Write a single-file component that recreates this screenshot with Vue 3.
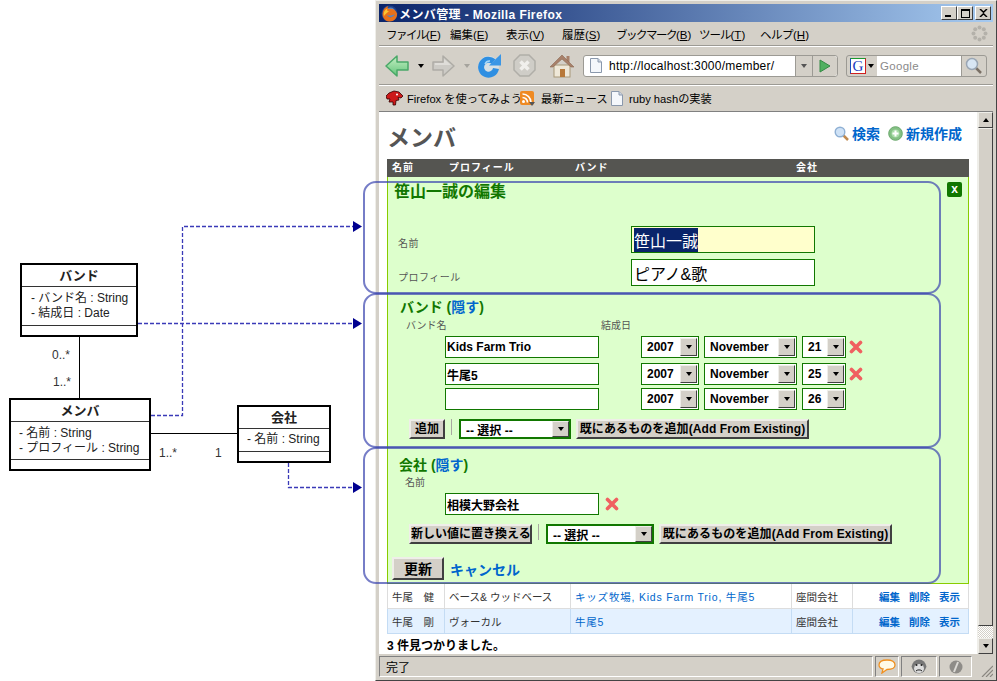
<template>
  <div class="page">
    <!-- uml diagram on the left -->
    <div class="diagram">
      <div v-for="box in umlBoxes" :key="box.name" class="uml" :class="box.cls">
        <div class="uml-name">{{ box.name }}</div>
        <div class="uml-attrs">
          <div v-for="a in box.attrs" :key="a">{{ a }}</div>
        </div>
        <div class="uml-ops"></div>
      </div>
      <span class="mult m1">0..*</span>
      <span class="mult m2">1..*</span>
      <span class="mult m3">1..*</span>
      <span class="mult m4">1</span>
    </div>

    <!-- browser window -->
    <div class="window">
      <div class="titlebar">
        <svg class="ff-icon" width="17" height="17" viewBox="0 0 17 17">
          <circle cx="8.500" cy="8.500" r="8" fill="#1f3f88" />
          <circle cx="9.500" cy="7.500" r="5" fill="#4f86cc" />
          <path d="M2 12C.5 7 3 2 7.500 1 6 2.500 6.500 4 8 4 11 3 15 4.500 16 8.500 16.500 13 13 16.500 8.500 16.500 5.500 16.500 3.500 15 2 12ZM6 10C7.500 13 12 13 14 9 12 10.500 8.500 11 6 10Z" fill="#e8701a" />
          <path d="M3 11C2 7.500 4 4.500 6.500 3.500 5.500 5.500 6.500 6.500 8.500 6 6.500 7.500 4.500 8.500 3 11Z" fill="#fbc431" />
        </svg>
        <span class="title-text">メンバ管理 - Mozilla Firefox</span>
        <div class="win-btns">
          <button class="win-btn"><i class="w-min"></i></button>
          <button class="win-btn"><i class="w-max"></i></button>
          <button class="win-btn close-btn">
            <svg width="9" height="8" viewBox="0 0 9 8"><path d="M1 0 4.500 3.200 8 0M1 8 4.500 4.800 8 8" stroke="#000" stroke-width="1.500" fill="none" /></svg>
          </button>
        </div>
      </div>

      <div class="menubar">
        <span v-for="m in menus" :key="m.label" class="menu-item" :style="{ width: m.w + 'px' }"><span :style="{ letterSpacing: m.ls + 'px' }">{{ m.label }}</span>(<u>{{ m.key }}</u>)</span>
        <svg class="throbber" width="17" height="17" viewBox="0 0 17 17">
          <g fill="#b4b1aa">
            <circle cx="8.500" cy="2.500" r="2" /><circle cx="12.800" cy="4.200" r="2" /><circle cx="14.500" cy="8.500" r="2" /><circle cx="12.800" cy="12.800" r="2" />
            <circle cx="8.500" cy="14.500" r="2" /><circle cx="4.200" cy="12.800" r="2" /><circle cx="2.500" cy="8.500" r="2" /><circle cx="4.200" cy="4.200" r="2" />
          </g>
        </svg>
      </div>

      <div class="toolbar">
        <svg width="24" height="22" viewBox="0 0 24 22" class="tb-back">
          <defs>
            <linearGradient id="backFill" x1="0" y1="0" x2="0" y2="1">
              <stop offset="0" stop-color="#c6f0c4" />
              <stop offset="1" stop-color="#62c47a" />
            </linearGradient>
          </defs>
          <path d="M1 11 12 1V7H23V15H12V21Z" fill="url(#backFill)" stroke="#4aa868" stroke-width="1.500" stroke-linejoin="round" />
        </svg>
        <i class="drop tb-d1"></i>
        <svg width="23" height="22" viewBox="0 0 23 22" class="tb-fwd">
          <path d="M22 11 11 1V7H1V15H11V21Z" fill="#cdcbc6" stroke="#aeaca6" stroke-width="1.500" stroke-linejoin="round" />
          <path d="M12 4V8H3V10H19Z" fill="#dfddd9" />
        </svg>
        <i class="drop off tb-d2"></i>
        <svg width="24" height="24" viewBox="0 0 24 24" class="tb-reload">
          <circle cx="11.500" cy="12.500" r="10.500" fill="#d8ebf8" opacity=".6" />
          <path d="M16.500 7.500A7.500 7.500 0 1 0 19 14.500" fill="none" stroke="#2f8fe2" stroke-width="6" />
          <path d="M12 11.500H24V0Z" fill="#3a96e6" />
          <path d="M8 10A5 5 0 0 1 13 7" fill="none" stroke="#a8d8f8" stroke-width="1.500" />
        </svg>
        <svg width="23" height="23" viewBox="0 0 23 23" class="tb-stop">
          <path d="M7 1H16L22 7V16L16 22H7L1 16V7Z" fill="#cfcdc7" stroke="#b0aea8" stroke-width="1.500" />
          <path d="M7.500 7.500 15.500 15.500M15.500 7.500 7.500 15.500" stroke="#f0efec" stroke-width="3.500" />
        </svg>
        <svg width="24" height="24" viewBox="0 0 24 24" class="tb-home">
          <rect x="4" y="11" width="16" height="12" fill="#efe8d8" stroke="#a89878" />
          <rect x="16.500" y="2" width="3" height="6" fill="#a8806a" />
          <path d="M0 13 12 1 24 13 21 13 12 5 3 13Z" fill="#a8806a" stroke="#8c6850" stroke-width=".6" />
          <rect x="10" y="15" width="5" height="8" fill="#b87838" />
        </svg>
        <div class="urlbar">
          <svg width="12" height="15" viewBox="0 0 12 15" class="page-ico">
            <path d="M.5.500H8L11.500 4V14.500H.5Z" fill="#f4f7fb" stroke="#8a98ac" />
            <path d="M8 .5V4H11.500" fill="#cdd6e2" stroke="#8a98ac" />
          </svg>
          <span class="url-text">http://localhost:3000/member/</span>
          <span class="url-drop"><i class="drop gray"></i></span>
          <span class="url-go">
            <svg width="12" height="14" viewBox="0 0 12 14"><path d="M1 1 11 7 1 13Z" fill="#50b060" stroke="#358a45" /></svg>
          </span>
        </div>
        <div class="searchbar">
          <span class="engine">
            <span class="g-box">G</span>
            <i class="drop"></i>
          </span>
          <span class="search-text">Google</span>
          <span class="search-go">
            <svg width="18" height="18" viewBox="0 0 18 18">
              <path d="M10.500 10.500 16 16" stroke="#7a7066" stroke-width="2.500" />
              <circle cx="7" cy="7" r="5.500" fill="#d8e6f4" stroke="#9aa6b4" stroke-width="1.500" />
            </svg>
          </span>
        </div>
      </div>

      <div class="bookmarks">
        <svg class="bm-dino" width="17" height="16" viewBox="0 0 17 16">
          <path d="M0 6 3 3 8 1 13 2 17 6 15 8 12 7.500 13 10 10 10.500 9.500 15 7 15 7 12 3 12 4 9 1 9Z" fill="#cc1a1a" stroke="#300" stroke-width=".8" />
          <circle cx="11" cy="4.500" r="1" fill="#fff" />
        </svg>
        <span class="bm-t1">Firefox を使ってみよう</span>
        <svg class="bm-rss" width="15" height="15" viewBox="0 0 15 15">
          <rect width="14" height="14" rx="2" fill="#ef8a22" />
          <circle cx="3.500" cy="10.500" r="1.500" fill="#fff" />
          <path d="M2.500 6.500A5 5 0 0 1 7.500 11.500M2.500 3A8.500 8.500 0 0 1 11 11.500" stroke="#fff" stroke-width="1.700" fill="none" />
          <path d="M9 11H15L12 15Z" fill="#555" />
        </svg>
        <span class="bm-t2">最新ニュース</span>
        <svg class="bm-page" width="12" height="15" viewBox="0 0 12 15">
          <path d="M.5.500H8L11.500 4V14.500H.5Z" fill="#f4f7fb" stroke="#8a98ac" />
          <path d="M8 .5V4H11.500" fill="#cdd6e2" stroke="#8a98ac" />
        </svg>
        <span class="bm-t3">ruby hashの実装</span>
      </div>

      <div class="viewport">
        <main class="content">
          <div class="head">
            <h1>メンバ</h1>
            <div class="head-links">
              <svg width="15" height="15" viewBox="0 0 15 15">
                <path d="M9 9 14 14" stroke="#c08a50" stroke-width="2.500" />
                <circle cx="6" cy="6" r="4.800" fill="#cfe2f6" stroke="#8fb0d4" stroke-width="1.400" />
              </svg>
              <a class="l-search">検索</a>
              <svg width="15" height="15" viewBox="0 0 15 15">
                <circle cx="7.500" cy="7.500" r="6.800" fill="#84c084" stroke="#6aa86c" />
                <circle cx="7.500" cy="7.500" r="4" fill="#a8dca8" />
                <path d="M7.500 4.500V10.500M4.500 7.500H10.500" stroke="#fff" stroke-width="2" />
              </svg>
              <a>新規作成</a>
            </div>
          </div>

          <div class="table-head tcols">
            <span>名前</span><span>プロフィール</span><span>バンド</span><span class="th4">会社</span>
          </div>

          <section class="panel">
            <button class="close-x">x</button>
            <h2 class="edit-title">笹山一誠の編集</h2>
            <div class="edit-row first">
              <label>名前</label>
              <div class="field big active"><span class="sel">笹山一誠</span></div>
            </div>
            <div class="edit-row second">
              <label>プロフィール</label>
              <div class="field big">ピアノ&amp;歌</div>
            </div>

            <h3 class="sub band-title">バンド (<a>隠す</a>)</h3>
            <div class="col-labels">
              <span class="cl1">バンド名</span><span>結成日</span>
            </div>
            <div v-for="(b, i) in bands" :key="i" class="band-row" :class="'r' + i">
              <div class="field name">{{ b.name }}</div>
              <div class="select y"><span>2007</span><b class="arrow"><i class="drop"></i></b></div>
              <div class="select m"><span>November</span><b class="arrow"><i class="drop"></i></b></div>
              <div class="select d"><span>{{ b.day }}</span><b class="arrow"><i class="drop"></i></b></div>
              <svg v-if="b.name" class="del" width="14" height="14" viewBox="0 0 14 14">
                <path d="M2.500 2.500 11.500 11.500M11.500 2.500 2.500 11.500" stroke="#f06060" stroke-width="3.600" stroke-linecap="round" />
              </svg>
            </div>
            <div class="actions band-actions">
              <button class="btn b-add">追加</button>
              <i class="sep"></i>
              <div class="select pick s1"><span>-- 選択 --</span><b class="arrow"><i class="drop"></i></b></div>
              <button class="btn b-exist">既にあるものを追加(Add From Existing)</button>
            </div>

            <h3 class="sub company-title">会社 (<a>隠す</a>)</h3>
            <div class="col-labels c2"><span class="cl2">名前</span></div>
            <div class="band-row company">
              <div class="field name">相模大野会社</div>
              <svg class="del" width="14" height="14" viewBox="0 0 14 14">
                <path d="M2.500 2.500 11.500 11.500M11.500 2.500 2.500 11.500" stroke="#f06060" stroke-width="3.600" stroke-linecap="round" />
              </svg>
            </div>
            <div class="actions company-actions">
              <button class="btn b-new">新しい値に置き換える</button>
              <i class="sep"></i>
              <div class="select pick s2"><span>-- 選択 --</span><b class="arrow"><i class="drop"></i></b></div>
              <button class="btn b-exist">既にあるものを追加(Add From Existing)</button>
            </div>

            <div class="submit-row">
              <button class="btn b-update">更新</button>
              <a class="cancel">キャンセル</a>
            </div>
          </section>

          <div v-for="(r, i) in rows" :key="i" class="row tcols" :class="{ alt: i === 1 }">
            <span class="cell">{{ r.name }}</span>
            <span class="cell">{{ r.profile }}</span>
            <span class="cell link">{{ r.band }}</span>
            <span class="cell">{{ r.company }}</span>
            <span class="cell ops"><a>編集</a><a>削除</a><a>表示</a></span>
          </div>

          <p class="found">3 件見つかりました。</p>
        </main>

        <div class="scrollbar">
          <b class="sb-btn"><i class="up"></i></b>
          <div class="sb-thumb"></div>
          <div class="sb-track"></div>
          <b class="sb-btn"><i class="drop"></i></b>
        </div>
      </div>

      <div class="statusbar">
        <span class="st-main">完了</span>
        <span class="st-cell s-a">
          <svg width="18" height="15" viewBox="0 0 18 15">
            <path d="M9 1C4 1 1 3 1 6 1 8 3 10 5 10L4 14 9 10.500C14 10.500 17 8.500 17 6 17 3 14 1 9 1Z" fill="#fffbe8" stroke="#f09020" stroke-width="1.300" />
          </svg>
        </span>
        <span class="st-cell s-b">
          <svg width="16" height="16" viewBox="0 0 16 16">
            <circle cx="2.500" cy="7.500" r="2" fill="#888" /><circle cx="13.500" cy="7.500" r="2" fill="#888" />
            <circle cx="8" cy="7.500" r="7" fill="#777" />
            <ellipse cx="8" cy="9.500" rx="5" ry="4.500" fill="#ddd" />
            <circle cx="5.500" cy="6" r="1" fill="#222" /><circle cx="10.500" cy="6" r="1" fill="#222" />
            <path d="M5 12C6 10.500 10 10.500 11 12" stroke="#222" fill="none" />
          </svg>
        </span>
        <span class="st-cell s-c">
          <svg width="14" height="14" viewBox="0 0 14 14">
            <circle cx="7" cy="7" r="6.500" fill="#8e8c88" />
            <path d="M5 12 9 2" stroke="#dcdad6" stroke-width="2" />
          </svg>
        </span>
        <svg class="grip" width="12" height="12" viewBox="0 0 12 12">
          <path d="M12 1 1 12M12 5 5 12M12 9 9 12" stroke="#8a8780" stroke-width="1.200" />
        </svg>
      </div>
    </div>

    <!-- callouts that lie over the window -->
    <div class="brace b1"></div>
    <div class="brace b2"></div>
    <div class="brace b3"></div>
    <svg class="wires" width="997" height="681" viewBox="0 0 997 681">
      <g fill="none" stroke="#000" stroke-width="1">
        <path d="M79.500 336V398M150 433.500H237" />
      </g>
      <g fill="none" stroke="#3a3ab8" stroke-width="1.300" stroke-dasharray="4 2">
        <path d="M151 415.500H182.500V226.500H353" />
        <path d="M138 323.500H353" />
        <path d="M288.500 463V487.500H353" />
      </g>
      <g fill="#000090">
        <path d="M353 221 362 226.500 353 232Z" />
        <path d="M353 318 362 323.500 353 329Z" />
        <path d="M353 482 362 487.500 353 493Z" />
      </g>
    </svg>
  </div>
</template>

<script setup>
const umlBoxes = [
  { name: 'バンド', cls: 'u-band', attrs: ['- バンド名 : String', '- 結成日 : Date'] },
  { name: 'メンバ', cls: 'u-member', attrs: ['- 名前 : String', '- プロフィール : String'] },
  { name: '会社', cls: 'u-company', attrs: ['- 名前 : String'] }
]

const menus = [
  { label: 'ファイル', key: 'F', w: 64, ls: -1.5 },
  { label: '編集', key: 'E', w: 56, ls: 0 },
  { label: '表示', key: 'V', w: 56, ls: 0 },
  { label: '履歴', key: 'S', w: 54, ls: 0 },
  { label: 'ブックマーク', key: 'B', w: 83, ls: -1.5 },
  { label: 'ツール', key: 'T', w: 61, ls: -1 },
  { label: 'ヘルプ', key: 'H', w: 60, ls: -.5 }
]

const bands = [
  { name: 'Kids Farm Trio', day: 21 },
  { name: '牛尾5', day: 25 },
  { name: '', day: 26 }
]

const rows = [
  { name: '牛尾　健', profile: 'ベース& ウッドベース', band: 'キッズ牧場, Kids Farm Trio, 牛尾5', company: '座間会社' },
  { name: '牛尾　剛', profile: 'ヴォーカル', band: '牛尾5', company: '座間会社' }
]
</script>

<style>
html, body { margin: 0; background: #fff; }
</style>

<style scoped>
.page {
  position: relative;
  display: flex;
  width: 997px;
  height: 681px;
  overflow: hidden;
  font-family: "Liberation Sans", "Noto Sans CJK JP", sans-serif;
  font-size: 12px;
  color: #000;
}
.page * { box-sizing: border-box; }

/* ---- diagram ---- */
.diagram { position: relative; width: 375px; flex: none; }
.uml {
  position: absolute;
  display: flex;
  flex-direction: column;
  border: 2px solid #000;
  background: #fff;
  font-size: 12px;
  color: #222;
}
.u-band { left: 20px; top: 263px; width: 118px; height: 74px; }
.u-member { left: 9px; top: 398px; width: 142px; height: 73px; }
.u-company { left: 237px; top: 405px; width: 94px; height: 58px; }
.uml-name {
  height: 22px;
  flex: none;
  line-height: 21px;
  text-align: center;
  font-weight: bold;
  font-size: 13px;
  border-bottom: 1px solid #333;
}
.uml-attrs {
  flex: 1;
  padding: 4px 0 0 9px;
  line-height: 14.500px;
  border-bottom: 1px solid #333;
}
.u-member .uml-attrs { padding-left: 8px; }
.u-company .uml-attrs { padding: 3px 0 0 8px; line-height: 15px; }
.uml-ops { height: 9px; flex: none; }
.mult { position: absolute; font-size: 12px; color: #333; line-height: 14px; }
.m1 { left: 52px; top: 348px; }
.m2 { left: 53px; top: 375px; }
.m3 { left: 159px; top: 446px; }
.m4 { left: 215px; top: 446px; }

/* ---- window chrome ---- */
.window {
  width: 622px;
  height: 681px;
  flex: none;
  display: flex;
  flex-direction: column;
  background: #d4d0c8;
  padding: 3px 3px 3px 3px;
  border: 1px solid;
  border-color: #efeee9 #444 #444 #efeee9;
}
.titlebar {
  height: 18px;
  flex: none;
  display: flex;
  align-items: center;
  padding: 0 2px;
  background: linear-gradient(90deg, #0a246a, #a6caf0);
  color: #fff;
  font-weight: bold;
  font-size: 12px;
}
.ff-icon { margin-right: 1px; flex: none; }
.title-text { letter-spacing: .4px; }
.win-btns { margin-left: auto; display: flex; gap: 0; }
.win-btn {
  width: 16px;
  height: 14px;
  padding: 0;
  margin-left: 0;
  position: relative;
  display: flex;
  align-items: center;
  justify-content: center;
  background: #d4d0c8;
  border: 1px solid;
  border-color: #fff #404040 #404040 #fff;
}
.close-btn { margin-left: 2px; }
.w-min { position: absolute; left: 3px; bottom: 2px; width: 6px; height: 2px; background: #000; }
.w-max { width: 9px; height: 9px; border: 1px solid #000; border-top-width: 2px; }

.menubar {
  height: 24px;
  flex: none;
  display: flex;
  align-items: center;
  padding-left: 7px;
  border-bottom: 1px solid #9c9a94;
  font-size: 11.500px;
}
.menu-item { flex: none; white-space: nowrap; }
.throbber { margin-left: auto; margin-right: 5px; }

.toolbar {
  position: relative;
  height: 39px;
  flex: none;
  display: flex;
  align-items: center;
  padding-left: 6px;
  border-top: 1px solid #fff;
  border-bottom: 1px solid #9c9a94;
}
.drop {
  display: inline-block;
  width: 0;
  height: 0;
  border: 3.500px solid transparent;
  border-top: 4px solid #000;
  border-bottom: 0;
}
.drop.off { border-top-color: #a5a39d; }
.drop.gray { border-top-color: #555; }
.tb-back { margin-right: 9px; }
.tb-d1 { margin-right: 8px; }
.tb-fwd { margin-right: 9px; }
.tb-d2 { margin-right: 7px; }
.tb-reload { margin-right: 12px; }
.tb-stop { margin-right: 14px; }
.tb-home { margin-right: 9px; }
.urlbar {
  width: 255px;
  height: 22px;
  display: flex;
  align-items: center;
  background: #fff;
  border: 1px solid #9c9a94;
  border-radius: 3px;
  font-size: 12px;
  letter-spacing: .25px;
}
.page-ico { margin: 0 7px 0 6px; flex: none; }
.url-text { flex: 1; white-space: nowrap; }
.url-drop, .url-go {
  height: 100%;
  display: flex;
  align-items: center;
  justify-content: center;
  background: #d4d0c8;
  border-left: 1px solid #9c9a94;
}
.url-drop { width: 17px; }
.url-go { width: 25px; border-radius: 0 3px 3px 0; }
.searchbar {
  width: 141px;
  height: 22px;
  margin-left: 8px;
  display: flex;
  align-items: center;
  border: 1px solid #9c9a94;
  border-radius: 3px;
  overflow: hidden;
}
.engine { width: 30px; height: 100%; display: flex; align-items: center; padding-left: 3px; gap: 2px; }
.g-box {
  width: 16px;
  height: 16px;
  border: 1px solid;
  border-color: #1a9a30 #d02020 #d02020 #1a50c0;
  background: #fff;
  color: #1a3ac0;
  font: 15px/14px "Liberation Serif", serif;
  text-align: center;
}
.search-text {
  flex: 1;
  height: 100%;
  line-height: 20px;
  padding-left: 3px;
  background: #fff;
  color: #8a8a8a;
  font-size: 11.500px;
  letter-spacing: .3px;
}
.search-go { width: 25px; height: 100%; display: flex; align-items: center; justify-content: center; border-left: 1px solid #9c9a94; }

.bookmarks {
  height: 27px;
  flex: none;
  display: flex;
  align-items: center;
  padding: 0 0 1px 7px;
  border-top: 1px solid #fff;
  border-bottom: 1px solid #808080;
  font-size: 11.200px;
  white-space: nowrap;
}
.bm-dino { margin-right: 4px; }
.bm-t1 { width: 113px; }
.bm-rss { margin-right: 6px; }
.bm-t2 { width: 70px; }
.bm-page { margin-right: 6px; }

/* ---- page in the browser ---- */
.viewport {
  flex: 1;
  min-height: 0;
  display: flex;
  background: #fff;
}
.content { flex: 1; min-width: 0; padding: 0 8px; }
.head { height: 47px; display: flex; justify-content: space-between; position: relative; }
.head h1 {
  margin: 12px 0 0 0;
  font-size: 23px;
  line-height: 28px;
  color: #555;
  font-weight: bold;
}
.head-links {
  display: flex;
  align-items: center;
  height: 20px;
  margin: 11px 7px 0 0;
  font-size: 14px;
  font-weight: bold;
}
.head-links a { color: #0066cc; margin-left: 3px; }
.head-links .l-search { margin-right: 8px; }
.table-head {
  height: 18px;
  background: #555551;
  color: #fff;
  font-size: 10px;
  font-weight: bold;
  line-height: 18px;
  letter-spacing: 1px;
}
.table-head span { padding-left: 5px; }
.tcols { display: grid; grid-template-columns: 57px 126px 221px 61px 117px; }
.th4 { padding-left: 6px; }

.panel {
  position: relative;
  height: 407px;
  background: #ddffcc;
  border-left: 1px solid #88cc00;
  border-right: 1px solid #88cc00;
  border-bottom: 1px solid #88cc00;
  overflow: hidden;
}
.close-x {
  position: absolute;
  right: 6px;
  top: 5px;
  width: 15px;
  height: 15px;
  padding: 0;
  border: none;
  border-radius: 2px;
  background: #117700;
  color: #fff;
  font: bold 12px/13px "Liberation Sans", sans-serif;
}
.edit-title {
  margin: 7px 0 0 6px;
  height: 16px;
  line-height: 16px;
  font-size: 16px;
  font-weight: bold;
  color: #117700;
}
.edit-row { display: flex; padding-left: 10px; }
.edit-row label { width: 233px; align-self: flex-end; font-size: 10px; line-height: 12px; color: #555; letter-spacing: .5px; }
.first { margin-top: 26px; }
.first label { padding-bottom: 3px; }
.second { margin-top: 6px; }
.second label { padding-bottom: 2px; }
.field {
  display: flex;
  align-items: center;
  background: #fff;
  border: 1px solid #117700;
  font-weight: bold;
  font-size: 12px;
  padding-left: 1px;
  white-space: nowrap;
}
.field.big { width: 184px; height: 27px; padding-left: 2px; font-size: 16px; font-weight: normal; color: #000; }
.field.active { background: #ffffcc; }
.sel { background: #0a246a; color: #fff; }
.sub {
  height: 18px;
  margin: 0 0 0 12px;
  line-height: 18px;
  font-size: 14px;
  font-weight: bold;
  color: #117700;
}
.sub a { color: #0066cc; }
.band-title { margin-top: 12px; }
.company-title { margin-top: 17px; margin-left: 11px; }
.col-labels { display: flex; height: 12px; margin-top: 4px; font-size: 10px; line-height: 12px; color: #555; }
.cl1 { margin-left: 18px; width: 195px; }
.c2 { margin-top: 3px; }
.cl2 { margin-left: 17px; }
.band-row { display: flex; align-items: center; height: 22px; padding-left: 57px; }
.r0, .company { margin-top: 4px; }
.r1 { margin-top: 5px; }
.r2 { margin-top: 3px; }
.field.name { width: 154px; height: 22px; margin-right: 42px; }
.company .field.name { margin-right: 3px; }
.select {
  display: flex;
  align-items: center;
  justify-content: space-between;
  height: 22px;
  background: #fff;
  border: 1px solid #117700;
  padding-left: 5px;
  font-weight: bold;
  font-size: 12px;
  white-space: nowrap;
}
.arrow {
  width: 17px;
  height: 18px;
  margin-right: 1px;
  display: flex;
  align-items: center;
  justify-content: center;
  background: #d4d0c8;
  border: 1px solid;
  border-color: #efeee9 #404040 #404040 #efeee9;
}
.select.y { width: 58px; margin-right: 5px; }
.select.m { width: 93px; margin-right: 5px; }
.select.d { width: 44px; }
.del { margin-left: 3px; }
.actions { display: flex; align-items: center; height: 20px; padding-left: 21px; }
.band-actions { margin-top: 9px; }
.company-actions { margin-top: 9px; }
.sep { width: 1px; height: 16px; background: #a8a8a0; margin: 0 7px 4px 6px; align-self: center; }
.btn {
  height: 20px;
  padding: 0;
  background: #d4d0c8;
  border: 2px solid;
  border-color: #efeee9 #404040 #404040 #efeee9;
  font: bold 12px/14px "Liberation Sans", "Noto Sans CJK JP", sans-serif;
  white-space: nowrap;
  color: #000;
}
.b-add { width: 36px; }
.b-new { width: 123px; }
.b-exist { width: 233px; letter-spacing: .1px; }
.pick { height: 20px; border-width: 2px; }
.pick .arrow { margin-right: 0; height: 16px; }
.pick.s1 { width: 112px; margin-right: 5px; }
.pick.s2 { width: 108px; margin-right: 5px; }
.submit-row { display: flex; align-items: center; margin: 13px 0 0 4px; }
.b-update { width: 52px; height: 23px; font-size: 14px; line-height: 18px; }
.cancel { margin-left: 6px; font-size: 14px; font-weight: bold; color: #0066cc; }

.row { height: 25px; font-size: 10.500px; color: #333; border-bottom: 1px solid #dddddd; }
.cell { display: flex; align-items: center; padding-left: 4px; border-left: 1px solid #dddddd; white-space: nowrap; }
.cell:last-child { border-right: 1px solid #dddddd; }
.row.alt { background: #e4f1ff; border-bottom-color: #c4dcf4; }
.row.alt .cell { border-color: #c4dcf4; }
.link { color: #0066cc; letter-spacing: .8px; }
.ops { justify-content: flex-end; gap: 9px; padding-right: 8px; }
.ops a { color: #0066cc; font-weight: bold; }
.found { margin: 5px 0 0; font-size: 12px; font-weight: bold; line-height: 14px; }

.scrollbar { width: 16px; flex: none; display: flex; flex-direction: column; background: #d4d0c8; border-left: 1px solid #efeee9; }
.sb-btn {
  height: 16px;
  flex: none;
  display: flex;
  align-items: center;
  justify-content: center;
  background: #d4d0c8;
  border: 1px solid;
  border-color: #efeee9 #404040 #404040 #efeee9;
}
.up { width: 0; height: 0; border: 3.500px solid transparent; border-bottom: 4px solid #000; border-top: 0; }
.sb-thumb { flex: 1; background: #d4d0c8; border: 1px solid; border-color: #efeee9 #404040 #404040 #efeee9; }
.sb-track { height: 12px; flex: none; background: repeating-conic-gradient(#fff 0 25%, #d4d0c8 0 50%) 0 0 / 2px 2px; }

.statusbar { height: 22px; flex: none; margin-top: 1px; display: flex; align-items: stretch; padding-top: 1px; position: relative; }
.st-cell, .st-main {
  display: flex;
  align-items: center;
  border: 1px solid;
  border-color: #808080 #fff #fff #808080;
  margin-right: 2px;
}
.st-main { width: 494px; padding-left: 6px; font-size: 12px; }
.st-cell { justify-content: center; }
.s-a { width: 24px; }
.s-b { width: 36px; }
.s-c { width: 33px; }
.grip { position: absolute; right: 0; bottom: 0; }

/* ---- overlays ---- */
.brace {
  position: absolute;
  left: 363px;
  width: 578px;
  border: 2px solid rgba(60, 70, 175, .7);
  border-radius: 13px;
  pointer-events: none;
}
.b1 { top: 181px; height: 113px; }
.b2 { top: 293px; height: 155px; }
.b3 { top: 447px; height: 137px; }
.wires { position: absolute; left: 0; top: 0; pointer-events: none; }
</style>
